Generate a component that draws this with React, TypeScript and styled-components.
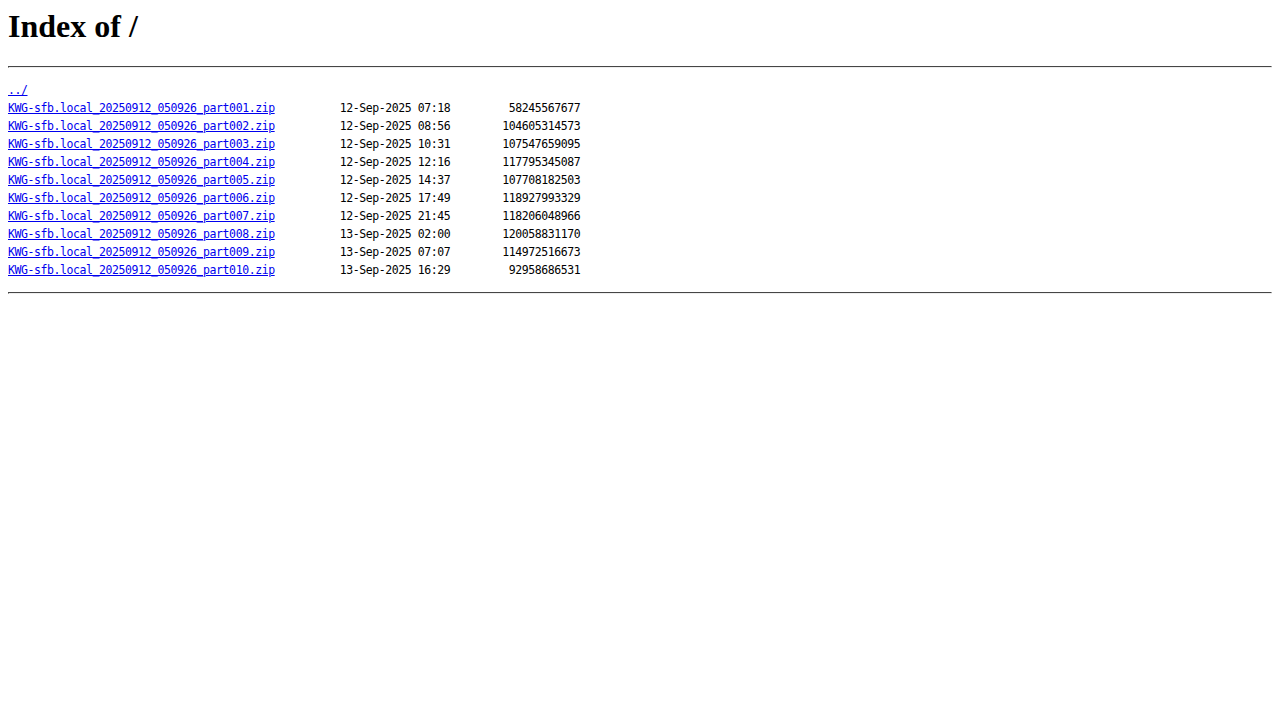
import { createGlobalStyle } from "styled-components";
import styled from "styled-components";

const GlobalStyle = createGlobalStyle`
  body {
    margin: 8px;
    background: #fff;
    color: #000;
  }
`;

const files = [
  ["KWG-sfb.local_20250912_050926_part001.zip", "12-Sep-2025 07:18", "58245567677"],
  ["KWG-sfb.local_20250912_050926_part002.zip", "12-Sep-2025 08:56", "104605314573"],
  ["KWG-sfb.local_20250912_050926_part003.zip", "12-Sep-2025 10:31", "107547659095"],
  ["KWG-sfb.local_20250912_050926_part004.zip", "12-Sep-2025 12:16", "117795345087"],
  ["KWG-sfb.local_20250912_050926_part005.zip", "12-Sep-2025 14:37", "107708182503"],
  ["KWG-sfb.local_20250912_050926_part006.zip", "12-Sep-2025 17:49", "118927993329"],
  ["KWG-sfb.local_20250912_050926_part007.zip", "12-Sep-2025 21:45", "118206048966"],
  ["KWG-sfb.local_20250912_050926_part008.zip", "13-Sep-2025 02:00", "120058831170"],
  ["KWG-sfb.local_20250912_050926_part009.zip", "13-Sep-2025 07:07", "114972516673"],
  ["KWG-sfb.local_20250912_050926_part010.zip", "13-Sep-2025 16:29", "92958686531"],
];

const App = () => {
  return (
    <>
      <GlobalStyle />
      <Title>Index of /</Title>
      <Rule />
      <Listing>
        <Entry href="../">../</Entry>
        {"\n"}
        {files.map(([name, date, size]) => (
          <span key={name}>
            <Entry href={name}>{name}</Entry>
            {" ".repeat(50 - name.length) + " " + date + size.padStart(20, " ") + "\n"}
          </span>
        ))}
      </Listing>
      <Rule />
    </>
  );
};

export default App;

const Title = styled.h1`
  margin: 0 0 21.44px;
  font-family: "Liberation Serif", "Times New Roman", serif;
  font-size: 32px;
  font-weight: bold;
`;

const Rule = styled.hr`
  margin: 8px 0;
  border: 1px inset #eee;
  border-color: #9a9a9a #eee #eee #9a9a9a;
  height: 0;
`;

const Listing = styled.pre`
  margin: 13px 0;
  font-family: "DejaVu Sans Mono", monospace;
  font-size: 11.5px;
  letter-spacing: -0.42px;
  line-height: 18px;
`;

const Entry = styled.a`
  color: #0000ee;
  text-decoration: underline;
`;
